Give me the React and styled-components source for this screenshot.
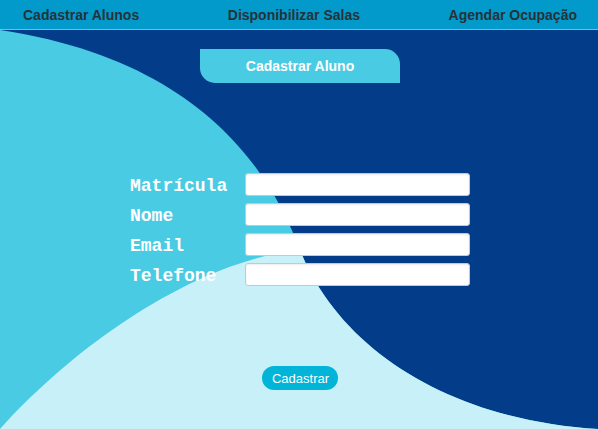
import styled, { createGlobalStyle } from 'styled-components';

const GlobalStyle = createGlobalStyle`
  html, body {
    margin: 0;
    padding: 0;
    height: 429px;
    overflow: hidden;
    font-family: "Liberation Sans", Arial, sans-serif;
  }
`;

const Page = styled.div`
  width: 598px;
  height: 429px;
  display: flex;
  flex-direction: column;
`;

const NavBar = styled.nav`
  height: 29px;
  display: flex;
  align-items: center;
  justify-content: space-between;
  padding: 0 21px 0 23px;
  background-color: #0299cb;
  border-bottom: 1px solid #52c9ea;
`;

const NavItem = styled.a`
  font-size: 14px;
  font-weight: bold;
  color: #263238;
  text-decoration: none;
  cursor: pointer;
`;

const Main = styled.main`
  position: relative;
  flex: 1;
  display: flex;
  flex-direction: column;
  align-items: center;
  padding-left: 2px;
  overflow: hidden;
  background-color: #033d8a;
`;

const Waves = styled.svg`
  position: absolute;
  inset: 0;
  width: 100%;
  height: 100%;
  z-index: 0;
`;

const Content = styled.div`
  position: relative;
  z-index: 1;
  display: flex;
  flex-direction: column;
  align-items: center;
`;

const Tab = styled.div`
  margin-top: 19px;
  width: 200px;
  height: 34px;
  display: flex;
  align-items: center;
  justify-content: center;
  background-color: #4acbe4;
  border-radius: 0 15px 0 15px;
  color: #fff;
  font-size: 14px;
  font-weight: bold;
`;

const Form = styled.form`
  margin-top: 90px;
  display: grid;
  grid-template-columns: 115px 225px;
  grid-auto-rows: 23px;
  row-gap: 7px;
  align-items: center;
`;

const Label = styled.label`
  font-family: "Liberation Mono", "Courier New", monospace;
  font-size: 18px;
  font-weight: bold;
  color: #fff;
  height: 23px;
  line-height: 26px;
`;

const Input = styled.input`
  box-sizing: border-box;
  width: 225px;
  height: 23px;
  margin: 0;
  border: 1px solid #c8c8c8;
  border-radius: 3px;
  background: #fff;
  box-shadow: inset 0 1px 2px rgba(0, 0, 0, 0.08);
  outline: none;
`;

const SubmitButton = styled.button`
  margin-top: 80px;
  height: 24px;
  padding: 0 9px 0 10px;
  border: none;
  border-radius: 12px;
  background-color: #02b4d8;
  color: #fff;
  font-family: "Liberation Sans", Arial, sans-serif;
  font-size: 13px;
  cursor: pointer;
`;

const fields = ['Matrícula', 'Nome', 'Email', 'Telefone'];

const App = () => {
  return (
    <>
      <GlobalStyle />
      <Page>
        <NavBar>
          <NavItem>Cadastrar Alunos</NavItem>
          <NavItem>Disponibilizar Salas</NavItem>
          <NavItem>Agendar Ocupação</NavItem>
        </NavBar>
        <Main>
          <Waves viewBox="0 30 598 399" preserveAspectRatio="none">
            <path
              d="M0,30 C200,60 270,170 300,250 C340,350 450,420 598,429 L0,429 Z"
              fill="#4acbe4"
            />
            <path
              d="M0,429 C80,340 200,260 300,250 C340,350 450,420 598,429 Z"
              fill="#c8f0f8"
            />
          </Waves>
          <Content>
            <Tab>Cadastrar Aluno</Tab>
            <Form onSubmit={(e) => e.preventDefault()}>
              {fields.map((f) => [
                <Label key={f + '-l'}>{f}</Label>,
                <Input key={f + '-i'} type="text" />,
              ])}
            </Form>
            <SubmitButton type="button">Cadastrar</SubmitButton>
          </Content>
        </Main>
      </Page>
    </>
  );
};

export default App;
